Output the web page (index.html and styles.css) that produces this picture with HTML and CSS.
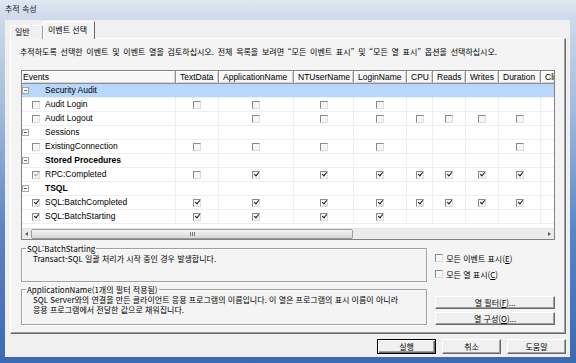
FILE: index.html
```html
<!DOCTYPE html>
<html lang="ko">
<head>
  <meta charset="UTF-8" />
  <meta name="viewport" content="width=device-width, initial-scale=1.0"/>
  <title>추적 속성</title>
  <link rel="stylesheet" href="styles.css">
</head>
<body>

  <div class="window">
    <div class="titlebar">추적 속성</div>

    <div class="client">
      <div class="tabs">
        <div class="tab">일반</div>
        <div class="tab active">이벤트 선택</div>
      </div>

      <div class="panel">
        <p class="intro">추적하도록 선택한 이벤트 및 이벤트 열을 검토하십시오. 전체 목록을 보려면 “모든 이벤트 표시” 및 “모든 열 표시” 옵션을 선택하십시오.</p>

        <div class="grid">
          <table>
            <colgroup>
              <col class="c-ev"><col class="c-td"><col class="c-app"><col class="c-nt"><col class="c-login">
              <col class="c-cpu"><col class="c-reads"><col class="c-writes"><col class="c-dur"><col class="c-cli">
            </colgroup>
            <thead>
              <tr>
                <th>Events</th><th>TextData</th><th>ApplicationName</th><th>NTUserName</th><th>LoginName</th>
                <th>CPU</th><th>Reads</th><th>Writes</th><th>Duration</th><th>Cli</th>
              </tr>
            </thead>
            <tbody>
              <tr class="cat selected">
                <td><div class="evc"><span class="tree"><span class="minus"></span></span><span class="slot"></span>Security Audit</div></td>
                <td></td><td></td><td></td><td></td><td></td><td></td><td></td><td></td><td></td>
              </tr>
              <tr>
                <td><div class="evc"><span class="tree"></span><span class="slot"><span class="cb"></span></span>Audit Login</div></td>
                <td><span class="cb"></span></td><td><span class="cb"></span></td><td><span class="cb"></span></td><td><span class="cb"></span></td>
                <td></td><td></td><td></td><td></td><td></td>
              </tr>
              <tr>
                <td><div class="evc"><span class="tree"></span><span class="slot"><span class="cb"></span></span>Audit Logout</div></td>
                <td></td><td><span class="cb"></span></td><td><span class="cb"></span></td><td><span class="cb"></span></td>
                <td><span class="cb"></span></td><td><span class="cb"></span></td><td><span class="cb"></span></td><td><span class="cb"></span></td><td></td>
              </tr>
              <tr class="cat">
                <td><div class="evc"><span class="tree"><span class="minus"></span></span><span class="slot"></span>Sessions</div></td>
                <td></td><td></td><td></td><td></td><td></td><td></td><td></td><td></td><td></td>
              </tr>
              <tr>
                <td><div class="evc"><span class="tree"></span><span class="slot"><span class="cb"></span></span>ExistingConnection</div></td>
                <td><span class="cb"></span></td><td><span class="cb"></span></td><td><span class="cb"></span></td><td><span class="cb"></span></td>
                <td></td><td></td><td></td><td><span class="cb"></span></td><td></td>
              </tr>
              <tr class="cat bold">
                <td><div class="evc"><span class="tree"><span class="minus"></span></span><span class="slot"></span>Stored Procedures</div></td>
                <td></td><td></td><td></td><td></td><td></td><td></td><td></td><td></td><td></td>
              </tr>
              <tr>
                <td><div class="evc"><span class="tree"></span><span class="slot"><span class="cb on dim"></span></span>RPC:Completed</div></td>
                <td><span class="cb"></span></td><td><span class="cb on"></span></td><td><span class="cb on"></span></td><td><span class="cb on"></span></td>
                <td><span class="cb on"></span></td><td><span class="cb on"></span></td><td><span class="cb on"></span></td><td><span class="cb on"></span></td><td></td>
              </tr>
              <tr class="cat bold">
                <td><div class="evc"><span class="tree"><span class="minus"></span></span><span class="slot"></span>TSQL</div></td>
                <td></td><td></td><td></td><td></td><td></td><td></td><td></td><td></td><td></td>
              </tr>
              <tr>
                <td><div class="evc"><span class="tree"></span><span class="slot"><span class="cb on"></span></span>SQL:BatchCompleted</div></td>
                <td><span class="cb on"></span></td><td><span class="cb on"></span></td><td><span class="cb on"></span></td><td><span class="cb on"></span></td>
                <td><span class="cb on"></span></td><td><span class="cb on"></span></td><td><span class="cb on"></span></td><td><span class="cb on"></span></td><td></td>
              </tr>
              <tr>
                <td><div class="evc"><span class="tree"></span><span class="slot"><span class="cb on"></span></span>SQL:BatchStarting</div></td>
                <td><span class="cb on"></span></td><td><span class="cb on"></span></td><td><span class="cb on"></span></td><td><span class="cb on"></span></td>
                <td></td><td></td><td></td><td></td><td></td>
              </tr>
            </tbody>
          </table>

          <div class="hscroll">
            <span class="arrow left"></span>
            <span class="thumb"><span class="grip"></span></span>
            <span class="track"></span>
            <span class="arrow right"></span>
          </div>
        </div>

        <div class="lower">
          <div class="groups">
            <fieldset class="group g1">
              <legend>SQL:BatchStarting</legend>
              <p>Transact-SQL 일괄 처리가 시작 중인 경우 발생합니다.</p>
            </fieldset>
            <fieldset class="group g2">
              <legend>ApplicationName(1개의 필터 적용됨)</legend>
              <p>SQL Server와의 연결을 만든 클라이언트 응용 프로그램의 이름입니다. 이 열은 프로그램의 표시 이름이 아니라<br>응용 프로그램에서 전달한 값으로 채워집니다.</p>
            </fieldset>
          </div>

          <div class="side">
            <label class="opt"><span class="cb"></span><span>모든 이벤트 표시(<u>E</u>)</span></label>
            <label class="opt"><span class="cb"></span><span>모든 열 표시(<u>C</u>)</span></label>
            <button class="btn side-btn">열 필터(<u>F</u>)...</button>
            <button class="btn side-btn second">열 구성(<u>O</u>)...</button>
          </div>
        </div>
      </div>

      <div class="footer">
        <button class="btn foot-btn default">실행</button>
        <button class="btn foot-btn">취소</button>
        <button class="btn foot-btn">도움말</button>
      </div>
    </div>
  </div>

</body>
</html>
```

FILE: styles.css
```css
* { margin: 0; padding: 0; box-sizing: border-box; }
body {
  width: 576px; height: 363px; overflow: hidden;
  font-family: "Noto Sans CJK KR", sans-serif;
  font-size: 8px; color: #000;
  background: #3c69ae;
}

/* Window frame */
.window {
  width: 576px; height: 363px;
  display: flex; flex-direction: column;
  padding: 0 6px 6px 5px;
  background: linear-gradient(#dfe7f3 0, #ccd9ea 20px, #a3bbdc 110px, #5a85c6 230px, #3b6ab3 100%);
}
.titlebar {
  height: 20px; line-height: 18px;
  color: #1a1a1a;
}
.client {
  flex: 1;
  display: flex; flex-direction: column;
  background: #f0f0f0;
  padding: 3px 4px 0 5px;
}

/* Tabs */
.tabs {
  display: flex; align-items: flex-end;
  height: 16px;
  margin-bottom: -1px;
  position: relative; z-index: 1;
}
.tab {
  width: 33px; height: 14px;
  padding-left: 4px;
  line-height: 12px;
  border: 1px solid #a0a0a0; border-bottom: none;
  border-color: #fff #a0a0a0 #a0a0a0 #fff;
  background: #f0f0f0;
}
.tab.active {
  width: 52px; height: 18px;
  line-height: 15px;
  border-color: #fff #696969 #696969 #fff;
  background: #f4f4f4;
}

.panel {
  height: 296px; flex: none;
  padding: 8px 10px 0 10px;
  border: 1px solid;
  border-color: #fff #696969 #696969 #fff;
  box-shadow: inset -1px -1px #a0a0a0;
  background: #f4f4f4;
}
.intro {
  line-height: 10px; height: 10px;
  margin-left: -1px;
  white-space: nowrap;
  word-spacing: 1.5px;
}

/* Event grid */
.grid {
  margin-top: 13px;
  height: 170px;
  display: flex; flex-direction: column;
  border: 1px solid #828282;
  background: #fff;
  overflow: hidden;
  font-family: "Liberation Sans", sans-serif;
  font-size: 8.5px;
}
.grid table {
  width: 579px;
  table-layout: fixed;
  border-collapse: separate; border-spacing: 0;
}
.c-ev { width: 154px; }
.c-td { width: 43px; }
.c-app { width: 75px; }
.c-nt { width: 60px; }
.c-login { width: 53px; }
.c-cpu { width: 26px; }
.c-reads { width: 33px; }
.c-writes { width: 33px; }
.c-dur { width: 42px; }
.c-cli { width: 60px; }

.grid th {
  height: 13px;
  padding-left: 4px;
  font-weight: normal; text-align: left;
  white-space: nowrap; overflow: hidden;
  line-height: 11px;
  background: #f7f7f7;
  border-right: 1px solid #8e8e8e;
  border-bottom: 1px solid #8e8e8e;
  box-shadow: inset 1px 1px #fff, inset -1px -1px #d4d4d4;
}
.grid th:first-child { padding-left: 1px; }
.grid td {
  height: 14px;
  padding: 0;
  text-align: center;
  white-space: nowrap;
  line-height: 13px;
  border-right: 1px solid #efefef;
  border-bottom: 1px solid #efefef;
}
.grid td:first-child { text-align: left; }
.grid tr.selected td { background: #b9d7fb; border-right-color: #b9d7fb; }
.grid tr.bold td { font-weight: bold; }

.evc { display: flex; align-items: center; height: 13px; }
.tree { width: 9px; display: flex; align-items: center; }
.slot { width: 14px; display: flex; align-items: center; padding-left: 1px; }

.minus {
  display: block;
  width: 7px; height: 7px;
  border: 1px solid #a6a6a6;
  background: #fbfbfb;
  position: relative;
}
.minus::after {
  content: ""; position: absolute;
  left: 1px; top: 2px; width: 3px; height: 1px;
  background: #6a6a6a;
}

/* Checkboxes */
.cb {
  display: inline-block;
  width: 8px; height: 8px;
  vertical-align: middle;
  border: 1px solid;
  border-color: #8a8a8a #dcdcdc #dcdcdc #8a8a8a;
  background: #f6f6f6;
  position: relative;
}
.cb.on::after {
  content: ""; position: absolute;
  left: 1px; top: 0px;
  width: 4px; height: 2px;
  border-left: 1.6px solid #1e1e1e;
  border-bottom: 1.6px solid #1e1e1e;
  transform: rotate(-50deg);
}
.cb.dim::after { border-color: #a8a8a8; }

/* Horizontal scrollbar */
.hscroll {
  margin-top: auto;
  height: 11px;
  display: flex; align-items: center;
  background: #ececec;
  border-top: 1px solid #e4e4e4;
}
.arrow {
  width: 9px; height: 10px;
  display: flex; align-items: center; justify-content: center;
}
.arrow::after {
  content: "";
  border-top: 2.5px solid transparent;
  border-bottom: 2.5px solid transparent;
}
.arrow.left::after { border-right: 3px solid #5a5a5a; }
.arrow.right::after { border-left: 3px solid #5a5a5a; }
.thumb {
  width: 322px; height: 10px;
  display: flex; align-items: center; justify-content: center;
  border: 1px solid #9c9c9c;
  border-radius: 2px;
  background: linear-gradient(#f6f6f6, #e6e6e6 50%, #d6d6d6);
}
.grip {
  width: 5px; height: 4px;
  background: repeating-linear-gradient(90deg, #7a7a7a 0 1px, transparent 1px 2px);
}
.track { flex: 1; }

/* Lower part */
.lower { display: flex; margin-top: 4px; }
.groups { width: 407px; }
.group {
  border: 1px solid #a0a0a0;
  box-shadow: inset 1px 1px #fff, 1px 1px #fff;
  padding: 0 8px 0 11px;
}
.group legend {
  margin-left: -7px;
  padding: 0 1px;
  line-height: 9px;
}
.group p { line-height: 9px; margin-top: 1px; }
.g1 { height: 38px; }
.g2 { height: 40px; margin-top: 3px; }
.g2 p { line-height: 10px; }

.side {
  width: 120px; margin-left: 8px;
  display: flex; flex-direction: column;
}
.opt {
  display: flex; align-items: center; gap: 3px;
  height: 12px; margin-top: 8px;
}
.opt + .opt { margin-top: 4px; }

.btn {
  font-family: inherit; font-size: 8px; color: #000;
  background: #f0f0f0;
  border: 1px solid;
  border-color: #fff #696969 #696969 #fff;
  box-shadow: inset -1px -1px #a0a0a0;
  line-height: 10px;
}
.side-btn { height: 13px; margin-top: 16px; }
.side-btn.second { margin-top: 3px; }

.footer {
  display: flex; justify-content: flex-end; gap: 6px;
  margin-top: 5px;
}
.foot-btn { width: 59px; height: 15px; }
.foot-btn.default {
  border: 1px solid #000;
  box-shadow: inset 1px 1px #fff, inset -1px -1px #696969, inset -2px -2px #a0a0a0;
}
```
